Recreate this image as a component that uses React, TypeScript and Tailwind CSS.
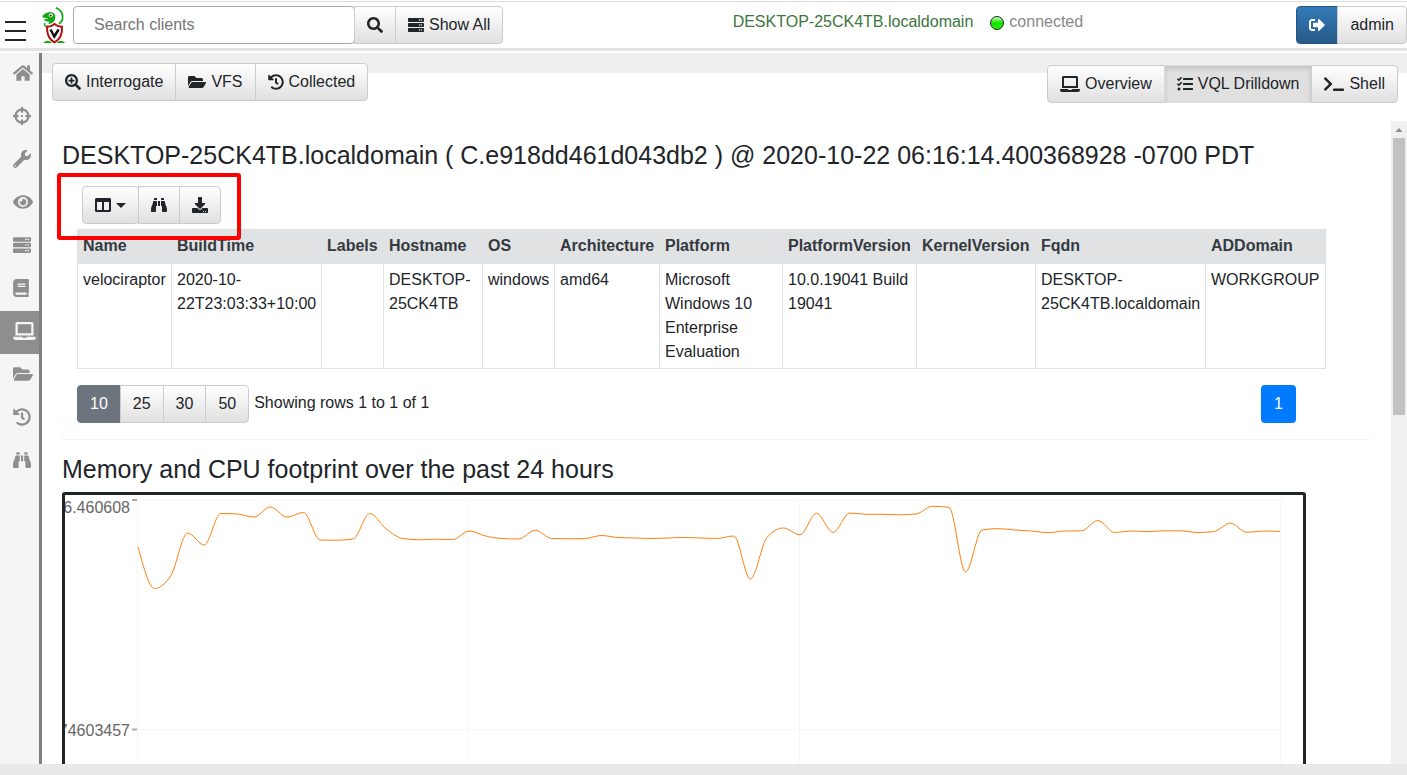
import type { ButtonHTMLAttributes, ReactNode } from "react";
import clsx from "clsx";
import {
  FaBinoculars,
  FaBook,
  FaColumns,
  FaCrosshairs,
  FaDownload,
  FaEye,
  FaFolderOpen,
  FaHistory,
  FaHome,
  FaLaptop,
  FaSearch,
  FaSearchPlus,
  FaServer,
  FaSignOutAlt,
  FaTasks,
  FaTerminal,
  FaWrench,
} from "react-icons/fa";

type Variant = "default" | "active" | "primary" | "secondary";

const variants: Record<Variant, string> = {
  default: "border-[#ccc] bg-linear-to-b from-white to-[#e0e0e0] text-[#212529]",
  active:
    "border-[#dbdbdb] bg-[#e0e0e0] text-[#212529] shadow-[inset_0_3px_5px_rgba(0,0,0,0.125)]",
  primary: "border-[#245580] bg-linear-to-b from-[#337ab7] to-[#265a88] text-white",
  secondary: "border-[#6c757d] bg-[#6c757d] text-white",
};

function Btn({
  variant = "default",
  className,
  children,
  ...rest
}: { variant?: Variant; children: ReactNode } & ButtonHTMLAttributes<HTMLButtonElement>) {
  return (
    <button
      type="button"
      className={clsx(
        "-ml-px flex h-[38px] items-center gap-[5px] border px-3 whitespace-nowrap first:ml-0 first:rounded-l last:rounded-r",
        variants[variant],
        className,
      )}
      {...rest}
    >
      {children}
    </button>
  );
}

function Logo() {
  return (
    <svg viewBox="0 0 24 38" className="h-[38px] w-6" role="img" aria-label="Velociraptor">
      <path
        d="M14 1.800 C18.500 3 21.500 8 20.500 13 C20 15.500 18.500 17 17 18"
        fill="none"
        stroke="#12a812"
        strokeWidth="1.800"
      />
      <path
        d="M0.300 11.200 C0.500 8.500 3.200 7.400 5.200 6.800 C7 5.600 9.800 5.600 11.200 7 C13.200 8 13.800 10.500 13 13 C12.500 15 11 16.500 9 17.500 L6 18 L7.500 15.800 C5 15.800 2.600 15 1.400 13.600 L6.500 12.800 Z"
        fill="#12a812"
      />
      <circle cx="8.800" cy="9.200" r="2" fill="#fff" />
      <circle cx="8.600" cy="9.400" r="1" fill="#111" />
      <path d="M2.500 17 C2.300 20 4 21 6 20.300" fill="none" stroke="#12a812" strokeWidth="1.500" />
      <path d="M1.500 37 C4 34 7 34 10 37 Z M14.500 37 C17.500 34 20.500 34 23 37 Z" fill="#12a812" />
      <path
        d="M12.500 18 C10.500 19.800 8 20.800 5 20.800 C4.800 27.500 7 33.500 12.500 36.300 C18 33.500 20.400 27.500 20 20.800 C17 20.800 14.500 19.800 12.500 18 Z"
        fill="#fff"
        stroke="#b30f0f"
        strokeWidth="2"
      />
      <path d="M8.500 23.500 L12.300 30.500 L16.600 23.500" fill="none" stroke="#111" strokeWidth="2.500" />
    </svg>
  );
}

function Header() {
  return (
    <header className="mt-px flex h-[50px] shrink-0 items-start border-t border-b-3 border-t-[#dcdcdc] border-b-[#e4e4e4] pt-1">
      <button type="button" aria-label="Toggle menu" className="flex h-[38px] w-[42px] items-end pb-px pl-1">
        <svg viewBox="0 0 24 24" className="size-6" stroke="#212529" strokeWidth="2">
          <path d="M1 3h21M1 12h21M1 21h21" />
        </svg>
      </button>
      <Logo />
      <form className="ml-[7px] flex" onSubmit={(e) => e.preventDefault()}>
        <input
          type="text"
          aria-label="Search clients"
          placeholder="Search clients"
          className="h-[38px] w-[282px] rounded border border-[#aaa] px-5 placeholder:text-[#757575]"
        />
        <Btn aria-label="Search" className="!rounded-none">
          <FaSearch />
        </Btn>
        <Btn>
          <FaServer />
          Show All
        </Btn>
      </form>
      <div className="flex h-8 flex-1 items-center justify-center gap-4 pl-4">
        <a href="#host" className="text-[#3c763d]">
          DESKTOP-25CK4TB.localdomain
        </a>
        <span className="flex items-center gap-1 text-[#888]">
          <svg viewBox="0 0 16 16" className="mt-[2px] size-4" aria-hidden="true">
            <defs>
              <linearGradient id="led" x1="0" y1="0" x2="0" y2="1">
                <stop offset="0" stopColor="#d8ffd0" />
                <stop offset="0.4" stopColor="#3aee20" />
                <stop offset="0.5" stopColor="#10e000" />
                <stop offset="1" stopColor="#22f808" />
              </linearGradient>
            </defs>
            <circle cx="8" cy="8" r="6.500" fill="url(#led)" stroke="#222" />
          </svg>
          connected
        </span>
      </div>
      <div className="flex">
        <Btn variant="primary" aria-label="Log out">
          <FaSignOutAlt />
        </Btn>
        <Btn>admin</Btn>
      </div>
    </header>
  );
}

const navItems = [
  { label: "Home", Icon: FaHome, size: "w-5" },
  { label: "Hunts", Icon: FaCrosshairs, size: "w-[18px]" },
  { label: "Artifacts", Icon: FaWrench, size: "w-[18px]" },
  { label: "Events", Icon: FaEye, size: "w-5" },
  { label: "Server", Icon: FaServer, size: "w-[18px]" },
  { label: "Notebooks", Icon: FaBook, size: "w-4" },
  { label: "Host", Icon: FaLaptop, size: "w-[23px]" },
  { label: "Files", Icon: FaFolderOpen, size: "w-5" },
  { label: "History", Icon: FaHistory, size: "w-[18px]" },
  { label: "Search", Icon: FaBinoculars, size: "w-[18px]" },
];

function Sidebar({ current }: { current: string }) {
  return (
    <nav className="w-[42px] shrink-0 border-r-3 border-[#808080] bg-[#f5f5f5]">
      {navItems.map(({ label, Icon, size }) => (
        <a
          key={label}
          href={`#${label.toLowerCase()}`}
          aria-label={label}
          className={clsx(
            "flex h-[43px] items-center pb-1 pl-[13px]",
            label === current ? "bg-[#8e8e8e] text-[#f5f5f5]" : "text-[#8e8e8e]",
          )}
        >
          <Icon className={clsx("h-[18px] shrink-0", size)} />
        </a>
      ))}
    </nav>
  );
}

function Toolbar() {
  return (
    <div className="flex h-[68px] shrink-0 items-start justify-between bg-[linear-gradient(#efefef_20px,#fff_20px)] pt-[10px] pr-[9px] pl-[10px]">
      <div className="flex">
        <Btn>
          <FaSearchPlus />
          Interrogate
        </Btn>
        <Btn>
          <FaFolderOpen className="h-4 w-[18px]" />
          VFS
        </Btn>
        <Btn>
          <FaHistory />
          Collected
        </Btn>
      </div>
      <div className="mt-[2px] flex">
        <Btn>
          <FaLaptop className="h-4 w-5" />
          Overview
        </Btn>
        <Btn variant="active">
          <FaTasks />
          VQL Drilldown
        </Btn>
        <Btn>
          <FaTerminal className="h-4 w-5" />
          Shell
        </Btn>
      </div>
    </div>
  );
}

const columns = [
  { name: "Name", value: "velociraptor", width: "w-[94px]" },
  { name: "BuildTime", value: "2020-10-22T23:03:33+10:00", width: "w-[150px]" },
  { name: "Labels", value: "", width: "w-[62px]" },
  { name: "Hostname", value: "DESKTOP-25CK4TB", width: "w-[99px]" },
  { name: "OS", value: "windows", width: "w-[72px]" },
  { name: "Architecture", value: "amd64", width: "w-[105px]" },
  { name: "Platform", value: "Microsoft Windows 10 Enterprise Evaluation", width: "w-[123px]" },
  { name: "PlatformVersion", value: "10.0.19041 Build 19041", width: "w-[134px]" },
  { name: "KernelVersion", value: "", width: "w-[119px]" },
  { name: "Fqdn", value: "DESKTOP-25CK4TB.localdomain", width: "w-[170px]" },
  { name: "ADDomain", value: "WORKGROUP", width: "w-[120px]" },
];

function ClientTable() {
  return (
    <table className="w-full table-fixed border-collapse text-left">
      <colgroup>
        {columns.map((c) => (
          <col key={c.name} className={c.width} />
        ))}
      </colgroup>
      <thead className="bg-[#e0e2e4] text-[#343a40]">
        <tr>
          {columns.map((c) => (
            <th key={c.name} className="h-[34px] border-x border-[#dee2e6] px-[5px] font-bold">
              {c.name}
            </th>
          ))}
        </tr>
      </thead>
      <tbody>
        <tr>
          {columns.map((c) => (
            <td key={c.name} className="border border-[#dee2e6] px-[5px] py-1 align-top">
              {c.value}
            </td>
          ))}
        </tr>
      </tbody>
    </table>
  );
}

function ResultsCard() {
  return (
    <section className="relative mt-[3px] rounded pt-[13px] pr-[45px] pb-4 pl-[15px] shadow-[0_1px_2px_rgba(0,0,0,0.06)]">
      <div className="absolute top-0 -left-[5px] h-[67px] w-[184px] rounded-[3px] border-4 border-[#ff0000]" />
      <div className="flex pl-[5px]">
        <Btn aria-label="Columns" className="!rounded-r">
          <FaColumns />
          <svg viewBox="0 0 10 5" className="h-[5px] w-[10px]" fill="currentColor" aria-hidden="true">
            <path d="M0 0H10L5 5Z" />
          </svg>
        </Btn>
        <Btn aria-label="Inspect">
          <FaBinoculars />
        </Btn>
        <Btn aria-label="Download">
          <FaDownload />
        </Btn>
      </div>
      <div className="mt-[5px]">
        <ClientTable />
      </div>
      <div className="mt-4 flex items-center">
        <div className="flex">
          <Btn variant="secondary">10</Btn>
          <Btn>25</Btn>
          <Btn>30</Btn>
          <Btn>50</Btn>
        </div>
        <span className="ml-[5px] pb-[2px]">Showing rows 1 to 1 of 1</span>
        <button type="button" className="mr-[30px] ml-auto h-[38px] rounded bg-[#007bff] px-[13px] text-white">
          1
        </button>
      </div>
    </section>
  );
}

const samples = [
  547, 588.5, 575, 533, 545, 513.5, 514, 517, 507, 517, 512.5, 540, 540.2, 539, 513.5, 529, 538.5,
  539.8, 539.2, 539.6, 531, 536, 538.5, 539, 530.3, 538.5, 538.8, 538.6, 535.5, 537.5, 538, 538.5,
  538, 537.5, 538, 538.4, 536, 579, 537.5, 528, 534.8, 513.2, 532.5, 513, 514.3, 514.3, 514.8, 514,
  506.3, 507.3, 572, 530, 528.6, 530, 531, 532.7, 531, 530.8, 520.5, 532.5, 531, 531.6, 530.8, 530.8,
  532.5, 531.6, 523.2, 532.3, 531, 531.4,
].map((y) => y - 495);

const plotLeft = 73;
const plotRight = 1215;

/* Monotone cubic interpolation through equally spaced samples. */
function monotonePath(ys: number[], x0: number, x1: number) {
  const h = (x1 - x0) / (ys.length - 1);
  const slopes = ys.slice(1).map((y, i) => (y - ys[i]) / h);
  const tangents = ys.map((_, i) => {
    if (i === 0) return slopes[0] * 1.4;
    if (i === ys.length - 1) return slopes[i - 1];
    const a = slopes[i - 1];
    const b = slopes[i];
    if (a * b <= 0) return 0;
    return Math.sign(a) * Math.min(Math.abs(a), Math.abs(b), Math.abs(a + b) / 4) * 2;
  });
  let d = `M${x0},${ys[0]}`;
  for (let i = 1; i < ys.length; i++) {
    const xa = x0 + (i - 1) * h;
    const xb = x0 + i * h;
    d += `C${xa + h / 3},${ys[i - 1] + (tangents[i - 1] * h) / 3} ${xb - h / 3},${ys[i] - (tangents[i] * h) / 3} ${xb},${ys[i]}`;
  }
  return d;
}

function FootprintChart() {
  return (
    <div className="mt-2 mr-[65px] overflow-hidden rounded-[3px] border-3 border-[#212529]">
      <svg viewBox="0 0 1238 400" className="block w-full" role="img" aria-label="Memory and CPU footprint">
        <g stroke="#f6f6f6" fill="none">
          <path d="M72.500 5V400M403.500 5V400M734.500 5V400M1215.500 5V400" />
          <path d="M72 5H1215M72 234.500H1215" />
        </g>
        <path d="M67 5H72M67 234.500H72" stroke="#aaa" strokeWidth="2" />
        <g fill="#666" fontSize="16" textAnchor="end">
          <text x="65" y="18">6.460608</text>
          <text x="65" y="241">74603457</text>
        </g>
        <path d={monotonePath(samples, plotLeft, plotRight)} fill="none" stroke="#ff7f0e" />
      </svg>
    </div>
  );
}

function Scrollbar() {
  return (
    <div className="w-4 shrink-0 bg-[#f0f0f0]" aria-hidden="true">
      <svg viewBox="0 0 16 17" className="h-[17px] w-4">
        <path d="M4.500 11 L8 7 L11.500 11 Z" fill="#8a8a8a" />
      </svg>
      <div className="mx-[2px] h-[277px] bg-[#c1c1c1]" />
    </div>
  );
}

export default function App() {
  return (
    <div className="flex h-screen flex-col overflow-hidden bg-white font-['Liberation_Sans',Arial,sans-serif] text-base text-[#212529]">
      <Header />
      <div className="mt-[2px] flex min-h-0 flex-1">
        <Sidebar current="Host" />
        <div className="flex min-w-0 flex-1 flex-col">
          <Toolbar />
          <div className="flex min-h-0 flex-1">
            <main className="min-w-0 flex-1 overflow-hidden pt-[19px] pr-5 pl-5">
              <h1 className="text-[25px] leading-[30px] whitespace-nowrap">
                DESKTOP-25CK4TB.localdomain ( C.e918dd461d043db2 ) @ 2020-10-22 06:16:14.400368928 -0700 PDT
              </h1>
              <ResultsCard />
              <h2 className="mt-[15px] text-[25px] leading-[30px]">
                Memory and CPU footprint over the past 24 hours
              </h2>
              <FootprintChart />
            </main>
            <Scrollbar />
          </div>
        </div>
      </div>
      <footer className="h-[11px] shrink-0 bg-[#e9e9e9]" />
    </div>
  );
}
